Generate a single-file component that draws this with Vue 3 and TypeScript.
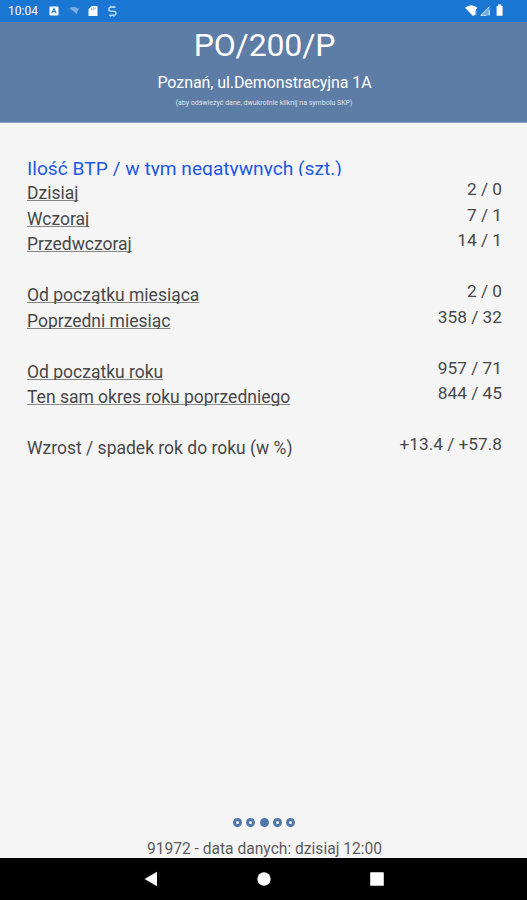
<script setup lang="ts">
interface StatRow {
  label: string
  value: string
  kind: 'link' | 'plain' | 'gap'
}

const rows: StatRow[] = [
  { label: 'Dzisiaj', value: '2 / 0', kind: 'link' },
  { label: 'Wczoraj', value: '7 / 1', kind: 'link' },
  { label: 'Przedwczoraj', value: '14 / 1', kind: 'link' },
  { label: '', value: '', kind: 'gap' },
  { label: 'Od początku miesiąca', value: '2 / 0', kind: 'link' },
  { label: 'Poprzedni miesiąc', value: '358 / 32', kind: 'link' },
  { label: '', value: '', kind: 'gap' },
  { label: 'Od początku roku', value: '957 / 71', kind: 'link' },
  { label: 'Ten sam okres roku poprzedniego', value: '844 / 45', kind: 'link' },
  { label: '', value: '', kind: 'gap' },
  { label: 'Wzrost / spadek rok do roku (w %)', value: '+13.4 / +57.8', kind: 'plain' },
]

const pageCount = 5
const activePage = 3
</script>

<template>
  <div class="screen">
    <div class="status">
      <span class="clock">10:04</span>
      <svg class="status-left" width="72" height="22" viewBox="0 0 72 22">
        <rect x="4.5" y="6.5" width="9" height="9" rx="1" fill="#fff" />
        <path d="M6.8 13.2 9 8.6l2.2 4.6M7.7 11.8h2.6" fill="none" stroke="#1976d2" stroke-width="1.1" />
        <path d="M23 8.8q5.5-3.6 11 0l-3 6-3-3.4z" fill="#fff" opacity=".42" />
        <path d="m24 8 8 7" stroke="#1976d2" stroke-width="1" />
        <path d="M46.8 6H52.5v10h-9V9.3z" fill="#fff" />
        <path d="M46.5 7.8v2M48.3 7.3v2.5M50.2 7.3v2.5" stroke="#1976d2" stroke-width=".6" />
        <path d="M70.5 7.3h-4.3q-2.4 0-2.4 2t2.4 2h2.4q2.4 0 2.4 2t-2.4 2h-4.4M65.7 5.8v1.5M68.8 5.8v1.5M65.7 15.2v1.5M68.8 15.2v1.5" fill="none" stroke="#fff" stroke-width="1.5" opacity=".7" />
      </svg>
      <svg class="status-right" width="42" height="22" viewBox="0 0 42 22">
        <path d="M0 7.8Q6.2 2.8 12.4 7.8L10 10.8v4.4L7.7 15.7z" fill="#fff" />
        <path d="M10.8 10v5" stroke="#c9def4" stroke-width="1" />
        <path d="M15.5 15.5 24.7 6.5v9z" fill="#fff" opacity=".38" />
        <path d="M15.5 15.5 24.5 6.5M16 15.3h5.5M24.2 10v5.5" stroke="#fff" stroke-width="1" opacity=".75" />
        <path d="M33 6v-1.5h3.4V6h1.2v9.8h-6V6z" fill="#fff" />
      </svg>
    </div>

    <header class="header">
      <h1 class="station">PO/200/P</h1>
      <p class="address">Poznań, ul.Demonstracyjna 1A</p>
      <p class="hint">(aby odświeżyć dane, dwukrotnie kliknij na symbolu SKP)</p>
    </header>

    <main class="stats">
      <div class="row">
        <h2 class="title">Ilość BTP / w tym negatywnych (szt.)</h2>
      </div>
      <div v-for="(row, i) in rows" :key="i" class="row">
        <template v-if="row.kind !== 'gap'">
          <span class="label" :class="{ link: row.kind === 'link' }">{{ row.label }}</span>
          <span class="value">{{ row.value }}</span>
        </template>
      </div>
    </main>

    <div class="dots">
      <span v-for="n in pageCount" :key="n" class="dot" :class="{ active: n === activePage }"></span>
    </div>
    <footer class="footer"><span>91972 - data danych: dzisiaj 12:00</span></footer>

    <nav class="navbar">
      <svg class="back" width="14" height="16" viewBox="0 0 14 16"><path d="M13 .8v14.4L.5 8z" fill="#fff" /></svg>
      <svg class="home" width="14" height="14" viewBox="0 0 14 14"><circle cx="7" cy="7" r="6.7" fill="#fff" /></svg>
      <svg class="recent" width="14" height="14" viewBox="0 0 14 14"><rect x=".2" y=".2" width="13.6" height="13.6" rx=".6" fill="#fff" /></svg>
    </nav>
  </div>
</template>

<style>
body {
  margin: 0;
}
</style>

<style scoped>
.screen {
  display: flex;
  flex-direction: column;
  width: 527px;
  height: 900px;
  overflow: hidden;
  background: #f5f5f5;
  color: #484848;
  font-family: Roboto, sans-serif;
}
.status {
  display: flex;
  flex: none;
  height: 22px;
  padding: 0 20px 0 8px;
  background: #1976d2;
  color: #fff;
}
.clock {
  width: 37px;
  font-size: 12px;
  line-height: 22px;
}
.status-right {
  margin-left: auto;
}
.header {
  flex: none;
  box-sizing: border-box;
  height: 101px;
  padding-top: 3px;
  border-bottom: 1px solid #8fa4c3;
  background: #5d7ca6;
  color: #fff;
  text-align: center;
}
.station,
.address,
.hint,
.title {
  margin: 0;
  font-weight: 400;
  white-space: nowrap;
}
.station {
  font-size: 32px;
  line-height: 40px;
  padding-left: 2px;
  letter-spacing: -0.15px;
}
.address {
  margin-top: 8px;
  font-size: 16px;
  line-height: 20px;
  padding-left: 2px;
  letter-spacing: -0.08px;
}
.hint {
  margin-top: 5px;
  font-size: 7px;
  line-height: 10px;
  padding-left: 1px;
  color: #dce4f0;
}
.stats {
  flex: 1;
  padding: 27.5px 25px 0 27px;
}
.row {
  display: flex;
  justify-content: space-between;
  height: 25.5px;
  overflow: hidden;
}
.title {
  padding-top: 6px;
  font-size: 19.2px;
  line-height: 24px;
  color: #1e58e6;
}
.label {
  padding-top: 7px;
  font-size: 17.5px;
  line-height: 20.5px;
  white-space: nowrap;
}
.link {
  text-decoration: underline;
  text-decoration-color: #858585;
  text-decoration-thickness: 1px;
  text-decoration-skip-ink: none;
  text-underline-offset: 1px;
}
.value {
  padding-top: 3px;
  font-size: 17.25px;
  line-height: 21px;
  white-space: nowrap;
}
.dots {
  display: flex;
  flex: none;
  justify-content: center;
  gap: 4.2px;
  height: 9px;
  padding-left: 1px;
  margin-bottom: 12px;
}
.dot {
  box-sizing: border-box;
  width: 9px;
  height: 9px;
  border: 3px solid #5078aa;
  border-radius: 50%;
}
.dot.active {
  background: #5078aa;
}
.footer {
  flex: none;
  height: 19px;
  padding-left: 2px;
  font-size: 15.6px;
  line-height: 20px;
  text-align: center;
  color: #5c5c5c;
}
.navbar {
  display: flex;
  flex: none;
  align-items: center;
  justify-content: space-between;
  height: 42px;
  padding: 0 143px 0 144px;
  background: #000;
}
</style>
